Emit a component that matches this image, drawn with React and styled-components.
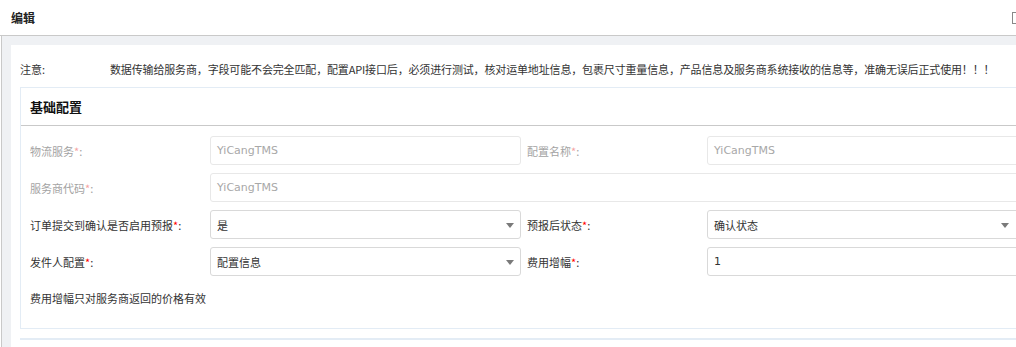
import styled, { createGlobalStyle } from 'styled-components';

const GlobalStyle = createGlobalStyle`
  html, body {
    margin: 0;
    padding: 0;
    overflow: hidden;
    background: #fff;
  }
  body {
    font-family: "Noto Sans CJK SC", "Microsoft YaHei", sans-serif;
    font-size: 11px;
    color: #333;
  }
`;

const Window = styled.div`
  width: 1040px;
  height: 347px;
  display: flex;
  flex-direction: column;
`;

const Header = styled.div`
  height: 36px;
  box-sizing: border-box;
  border-bottom: 1px solid #c9c9c9;
  display: flex;
  align-items: center;
  justify-content: space-between;
  padding: 0 0 0 11px;
`;

const HeaderTitle = styled.h1`
  margin: 0;
  font-size: 12px;
  font-weight: 700;
  color: #222;
`;

const MaxIcon = styled.span`
  width: 9px;
  height: 10px;
  border: 1px solid #888;
  margin-right: 17px;
  margin-top: 1px;
`;

const Body = styled.div`
  flex: 1;
  margin-left: 1px;
  border-left: 1px solid #c9c9c9;
  background: #eff1f4;
  padding: 9px 0 0 9px;
  display: flex;
`;

const Card = styled.div`
  flex: 1;
  background: #fff;
  padding: 14px 0 0 9px;
`;

const Notice = styled.div`
  display: flex;
  line-height: 20px;
  height: 20px;
  margin-bottom: 8px;
  white-space: nowrap;
`;

const NoticeLabel = styled.span`
  width: 90px;
  flex: none;
`;

const NoticeText = styled.span`
  letter-spacing: -0.15px;
`;

const Panel = styled.section`
  border: 1px solid #e3ecf5;
  border-right: none;
  margin-bottom: 9px;
`;

const PanelHeader = styled.div`
  height: 37px;
  border-bottom: 1px solid #c9c9c9;
  display: flex;
  align-items: center;
  padding-left: 9px;
`;

const PanelTitle = styled.h2`
  margin: 0;
  font-size: 13px;
  font-weight: 700;
  color: #111;
`;

const PanelBody = styled.div`
  padding: 10px 0 0 9px;
  display: flex;
  flex-direction: column;
  gap: 8px;
  height: 202px;
  box-sizing: border-box;
`;

const Row = styled.div`
  display: flex;
  align-items: center;
  height: 29px;
`;

const Label = styled.label`
  width: 180px;
  flex: none;
  color: ${(p) => (p.$disabled ? '#a3a3a3' : '#333')};
  margin-left: ${(p) => (p.$second ? '6px' : '0')};
  white-space: nowrap;
`;

const Star = styled.span`
  color: ${(p) => (p.$disabled ? '#f5a3a3' : '#f00')};
`;

const Field = styled.div`
  position: relative;
  box-sizing: border-box;
  height: 29px;
  width: ${(p) => (p.$grow ? 'auto' : '311px')};
  flex: ${(p) => (p.$grow ? '1' : 'none')};
  border: 1px solid ${(p) => (p.$disabled ? '#e8e8e8' : '#d9d9d9')};
  border-radius: 3px;
  padding: 0 6px;
  display: flex;
  align-items: center;
  font-family: "DejaVu Sans", "Noto Sans CJK SC", sans-serif;
  color: ${(p) => (p.$disabled ? '#a8a8a8' : '#333')};
  white-space: nowrap;
`;

const Arrow = styled.span`
  position: absolute;
  right: ${(p) => p.$right || 6}px;
  top: 12px;
  width: 0;
  height: 0;
  border-left: 4px solid transparent;
  border-right: 4px solid transparent;
  border-top: 5px solid #7a7a7a;
`;

const Hint = styled.p`
  margin: 4px 0 0;
  line-height: 20px;
`;

const NextPanel = styled.section`
  border: 1px solid #e3ecf5;
  border-right: none;
  flex: 1;
`;

function FormLabel({ text, disabled, second }) {
  return (
    <Label $disabled={disabled} $second={second}>
      {text}
      <Star $disabled={disabled}>*</Star>:
    </Label>
  );
}

export default function App() {
  return (
    <>
      <GlobalStyle />
      <Window>
        <Header>
          <HeaderTitle>编辑</HeaderTitle>
          <MaxIcon />
        </Header>
        <Body>
          <Card>
            <Notice>
              <NoticeLabel>注意:</NoticeLabel>
              <NoticeText>
                数据传输给服务商，字段可能不会完全匹配，配置API接口后，必须进行测试，核对运单地址信息，包裹尺寸重量信息，产品信息及服务商系统接收的信息等，准确无误后正式使用！！！
              </NoticeText>
            </Notice>
            <Panel>
              <PanelHeader>
                <PanelTitle>基础配置</PanelTitle>
              </PanelHeader>
              <PanelBody>
                <Row>
                  <FormLabel text="物流服务" disabled />
                  <Field $disabled>YiCangTMS</Field>
                  <FormLabel text="配置名称" disabled second />
                  <Field $disabled $grow>YiCangTMS</Field>
                </Row>
                <Row>
                  <FormLabel text="服务商代码" disabled />
                  <Field $disabled $grow>YiCangTMS</Field>
                </Row>
                <Row>
                  <FormLabel text="订单提交到确认是否启用预报" />
                  <Field>
                    是<Arrow />
                  </Field>
                  <FormLabel text="预报后状态" second />
                  <Field $grow>
                    确认状态<Arrow $right={30} />
                  </Field>
                </Row>
                <Row>
                  <FormLabel text="发件人配置" />
                  <Field>
                    配置信息<Arrow />
                  </Field>
                  <FormLabel text="费用增幅" second />
                  <Field $grow>1</Field>
                </Row>
                <Hint>费用增幅只对服务商返回的价格有效</Hint>
              </PanelBody>
            </Panel>
            <NextPanel />
          </Card>
        </Body>
      </Window>
    </>
  );
}
